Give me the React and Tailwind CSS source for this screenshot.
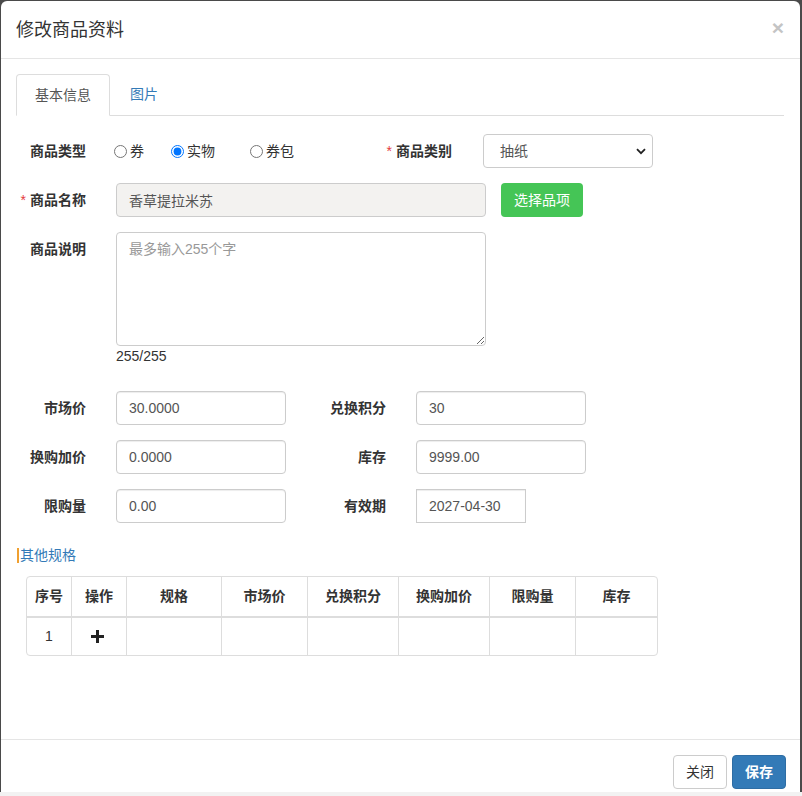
import React from 'react';

const font = { fontFamily: '"Liberation Sans", "Noto Sans CJK SC", sans-serif' };

function Label({ children, required, className = '' }) {
  return (
    <div className={`shrink-0 text-right pr-[15px] font-bold text-[14px] text-[#333] ${className}`}>
      {required && <span className="text-[#e4393c] font-normal mr-[4px]">*</span>}
      {children}
    </div>
  );
}

function TextInput({ value, className = 'w-[170px]', rounded = 'rounded-[4px]' }) {
  return (
    <input
      readOnly
      value={value}
      className={`h-[34px] border border-[#ccc] ${rounded} px-[12px] text-[14px] text-[#555] bg-white outline-none shadow-[inset_0_1px_1px_rgba(0,0,0,0.075)] ${className}`}
    />
  );
}

function Radio({ label, checked, className = '' }) {
  return (
    <label className={`flex items-center gap-[1px] text-[14px] text-[#333] ${className}`}>
      <input type="radio" name="type" defaultChecked={checked} className="w-[13px] h-[13px] m-0 mr-[2px]" />
      {label}
    </label>
  );
}

const cols = [
  ['序号', 'w-[44px]'],
  ['操作', 'w-[55px]'],
  ['规格', 'w-[95px]'],
  ['市场价', 'w-[86px]'],
  ['兑换积分', 'w-[91px]'],
  ['换购加价', 'w-[91px]'],
  ['限购量', 'w-[86px]'],
  ['库存', 'flex-1'],
];

export default function App() {
  return (
    <div className="w-[802px] h-[796px] overflow-hidden bg-[#4a4a4a] flex flex-col" style={font}>
      <div className="ml-[1px] mr-[2px] mt-[1px] h-[791px] bg-white rounded-t-[6px] flex flex-col overflow-hidden">
        {/* header */}
        <div className="h-[58px] shrink-0 border-b border-[#e5e5e5] flex items-center justify-between px-[15px]">
          <h4 className="text-[18px] text-[#333] leading-none">修改商品资料</h4>
          <span className="text-[21px] font-bold text-[#c4c4c4] leading-none -mt-[4px] mr-[1px]">×</span>
        </div>

        {/* body */}
        <div className="flex-1 px-[15px] pt-[15px]">
          <div className="flex border-b border-[#ddd] h-[42px] mr-[1px]">
            <div className="h-[42px] px-[18px] border border-[#ddd] border-b-white rounded-t-[4px] bg-white flex items-center text-[14px] text-[#555]">
              基本信息
            </div>
            <div className="ml-[2px] px-[18px] flex items-center text-[14px] text-[#337ab7]">图片</div>
          </div>

          <div className="pt-[18px]">
            {/* row 1 */}
            <div className="flex items-center h-[34px]">
              <Label className="w-[85px]">商品类型</Label>
              <div className="ml-[15px] w-[240px] flex items-center">
                <Radio label="券" className="ml-[-2px]" />
                <Radio label="实物" checked className="ml-[27px]" />
                <Radio label="券包" className="ml-[35px]" />
              </div>
              <Label required className="w-[111px]">商品类别</Label>
              <div className="ml-[16px] relative w-[170px] h-[34px] border border-[#ccc] rounded-[4px] flex items-center pl-[16px] text-[14px] text-[#555]">
                抽纸
                <svg className="absolute right-[6px] top-[13px]" width="10" height="7" viewBox="0 0 10 7">
                  <path d="M1 1.2 L5 5.2 L9 1.2" fill="none" stroke="#222" strokeWidth="1.8" />
                </svg>
              </div>
            </div>

            {/* row 2 */}
            <div className="flex items-center h-[34px] mt-[15px]">
              <Label required className="w-[85px]">商品名称</Label>
              <input
                readOnly
                value="香草提拉米苏"
                className="ml-[15px] w-[370px] h-[34px] border border-[#ccc] rounded-[4px] px-[12px] text-[14px] text-[#555] bg-[#f3f2f0] outline-none"
              />
              <button className="ml-[15px] h-[34px] w-[82px] rounded-[4px] bg-[#45c556] text-white text-[14px]">选择品项</button>
            </div>

            {/* row 3 */}
            <div className="flex mt-[15px]">
              <Label className="w-[85px] pt-[7px]">商品说明</Label>
              <div className="ml-[15px]">
                <textarea
                  placeholder="最多输入255个字"
                  className="block w-[370px] h-[114px] border border-[#ccc] rounded-[4px] px-[12px] py-[6px] text-[14px] text-[#555] placeholder-[#999] outline-none"
                />
                <div className="text-[14px] text-[#333] leading-[20px]">255/255</div>
              </div>
            </div>

            {/* rows 4-6 */}
            {[
              ['市场价', '30.0000', '兑换积分', '30'],
              ['换购加价', '0.0000', '库存', '9999.00'],
              ['限购量', '0.00', '有效期', '2027-04-30'],
            ].map(([l1, v1, l2, v2], i) => (
              <div key={l1} className={`flex items-center h-[34px] ${i === 0 ? 'mt-[25px]' : 'mt-[15px]'}`}>
                <Label className="w-[85px]">{l1}</Label>
                <div className="ml-[15px]">
                  <TextInput value={v1} />
                </div>
                <Label className="w-[115px]">{l2}</Label>
                <div className="ml-[15px]">
                  {i === 2 ? <TextInput value={v2} className="w-[110px]" rounded="rounded-none" /> : <TextInput value={v2} />}
                </div>
              </div>
            ))}

            {/* other specs */}
            <div className="mt-[22px] flex items-center h-[20px] ml-[1px]">
              <span className="border-l-2 border-[#f0a030] h-[15px] mr-[1px]" />
              <span className="text-[14px] text-[#337ab7]">其他规格</span>
            </div>

            <div className="mt-[11px] ml-[10px] w-[632px] border border-[#ddd] rounded-[4px] overflow-hidden text-[14px] text-[#333]">
              <div className="flex h-[41px] border-b-2 border-[#ddd]">
                {cols.map(([t, w], i) => (
                  <div key={t} className={`${w} flex items-center justify-center font-bold ${i > 0 ? 'border-l border-[#ddd]' : ''}`}>
                    {t}
                  </div>
                ))}
              </div>
              <div className="flex h-[37px]">
                {cols.map(([t, w], i) => (
                  <div key={t} className={`${w} flex items-center justify-center ${i > 0 ? 'border-l border-[#ddd]' : ''}`}>
                    {i === 0 && '1'}
                    {i === 1 && (
                      <svg width="13" height="13" viewBox="0 0 13 13" className="-ml-[3px]">
                        <rect x="5" y="0" width="3" height="13" fill="#222" />
                        <rect x="0" y="5" width="13" height="3" fill="#222" />
                      </svg>
                    )}
                  </div>
                ))}
              </div>
            </div>
          </div>
        </div>

        {/* footer */}
        <div className="shrink-0 h-[53px] border-t border-[#e5e5e5] flex justify-end items-start pt-[15px] pr-[14px] gap-[5px]">
          <button className="h-[34px] px-[12px] border border-[#ccc] rounded-[4px] bg-white text-[14px] text-[#333]">关闭</button>
          <button className="h-[34px] px-[12px] border border-[#2e6da4] rounded-[4px] bg-[#337ab7] text-[14px] text-white font-bold">保存</button>
        </div>
      </div>
      <div className="flex-1 bg-[#f2f2f2]" />
    </div>
  );
}
